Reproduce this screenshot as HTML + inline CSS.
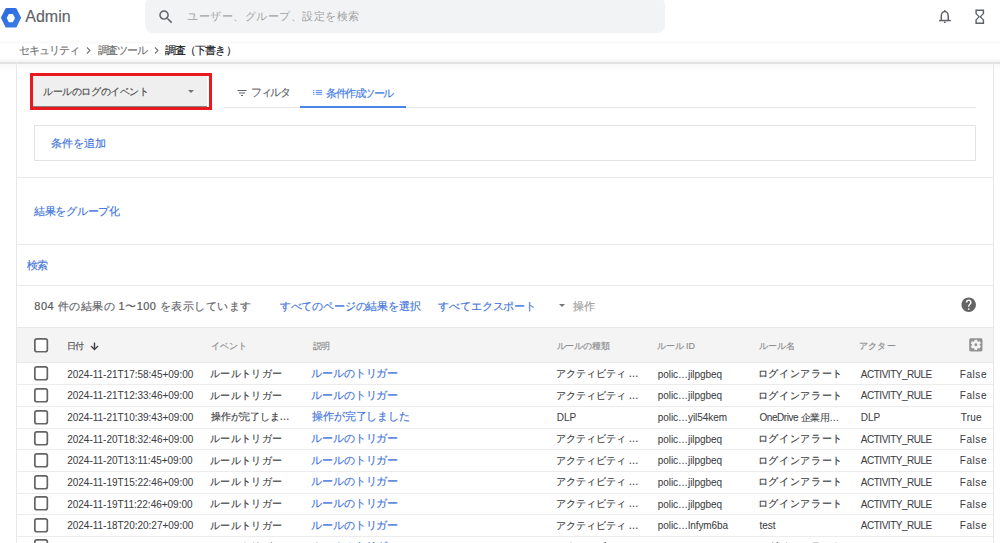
<!DOCTYPE html>
<html lang="ja">
<head>
<meta charset="utf-8">
<style>
*{box-sizing:border-box;margin:0;padding:0}
html,body{width:1000px;height:543px;overflow:hidden;background:#fff}
body{font-family:"Liberation Sans",sans-serif;color:#3c4043;position:relative;-webkit-text-stroke:0.15px currentColor}
.a{position:absolute;white-space:nowrap}
svg.a{overflow:visible}
.blue{color:#3f74dc}
.admin{left:25.3px;top:6.8px;font-size:16px;line-height:20px;color:#5f6368}
.search{left:145px;top:-3px;width:520px;height:36px;background:#f1f3f4;border-radius:8px}
.hdrline{left:0;top:62px;width:1000px;height:1.5px;background:#e2e2e2}
.hdrtop{left:0;top:58px;width:1000px;height:4px;background:linear-gradient(#fff,#f3f3f3)}
.hdr40{left:0;top:40px;width:1000px;height:5px;background:linear-gradient(#fff,#fafafa,#fff)}
.hdrsh{left:0;top:63.5px;width:1000px;height:8px;background:linear-gradient(#f8f8f8,#fdfdfd 60%,#fff)}
.vl{position:absolute;width:1px;background:#e8e8e8}
.hl{position:absolute;height:1px;background:#e8e8e8}
.cb{position:absolute;width:14.2px;height:14.6px;background:#fff}
.cb svg{position:absolute;left:0;top:0;width:14.2px;height:14.6px;overflow:visible}
.rl{position:absolute;left:17px;width:976px;height:1px;background:#ececec}
.c{position:absolute;white-space:nowrap;font-size:10px;line-height:12px;color:#3c4043;-webkit-text-stroke:0.15px currentColor}
.c.d{color:#3f74dc;font-size:11px}
.hd{position:absolute;white-space:nowrap;font-size:9px;line-height:12px;color:#8c8c8c;top:340px}
</style>
</head>
<body>
<!-- header -->
<svg class="a" style="left:0;top:7px;width:23px;height:22px" viewBox="0 0 23 22">
  <defs><linearGradient id="lg" x1="0" y1="0" x2="1" y2="1"><stop offset="0" stop-color="#2a68dc"/><stop offset="1" stop-color="#3f7ee8"/></linearGradient></defs>
  <path d="M0.9,10.8 L5.4,1.7 Q5.8,1 6.6,1 L15.4,1 Q16.2,1 16.6,1.7 L21.1,10.8 L16.6,19.9 Q16.2,20.6 15.4,20.6 L6.6,20.6 Q5.8,20.6 5.4,19.9 Z" fill="url(#lg)"/>
  <path d="M6.7,11.1 L8.9,6.9 L12.8,6.9 L15,11.1 L12.8,15.3 L8.9,15.3 Z" fill="#fff"/>
</svg>
<div class="a admin">Admin</div>
<div class="a search"></div>
<svg class="a" style="left:157px;top:8px;width:17.8px;height:17.8px" viewBox="0 0 24 24"><path fill="#5f6368" d="M15.5 14h-.79l-.28-.27A6.471 6.471 0 0 0 16 9.5 6.5 6.5 0 1 0 9.5 16c1.61 0 3.09-.59 4.23-1.57l.27.28v.79l5 4.99L20.49 19l-4.99-5zm-6 0C7.01 14 5 11.990 5 9.5S7.01 5 9.5 5 14 7.01 14 9.5 11.99 14 9.5 14z"/></svg>
<div class="a" style="left:187px;top:8.5px;font-size:11px;letter-spacing:0.5px;line-height:14px;color:#a2a2a2;-webkit-text-stroke:0">ユーザー、グループ、設定を検索</div>
<svg class="a" style="left:934px;top:6px;width:22px;height:22px" viewBox="0 0 22 22"><g fill="#5f6368"><path d="M7.3,14.3 V9.9 A3.45,4.5 0 0 1 14.2,9.9 V14.3" fill="none" stroke="#5f6368" stroke-width="1.5"/><rect x="5.1" y="13.8" width="11.7" height="1.5"/><rect x="9.95" y="3.9" width="1.6" height="1.6" rx="0.6"/><rect x="9.9" y="15.6" width="1.8" height="1.4"/></g></svg>
<svg class="a" style="left:970.8px;top:7.7px;width:17.5px;height:17.5px" viewBox="0 0 24 24"><path fill="#5f6368" d="M6 2v6h.01L6 8.01 10 12l-4 4 .01.01H6V22h12v-5.990h-.01L18 16l-4-4 4-3.99-.01-.01H18V2H6zm10 14.5V20H8v-3.5l4-4 4 4zm-4-5l-4-4V4h8v3.5l-4 4z"/></svg>

<!-- breadcrumb -->
<div class="a" style="left:18.6px;top:43px;font-size:10.5px;letter-spacing:-0.84px;line-height:14px;color:#757575">セキュリティ</div>
<svg class="a" style="left:86px;top:46px;width:5px;height:9px" viewBox="0 0 5 9"><path d="M1,1.5 L4,4.5 L1,7.5" fill="none" stroke="#757575" stroke-width="1.1"/></svg>
<div class="a" style="left:97.6px;top:43px;font-size:10.5px;letter-spacing:-1.15px;line-height:14px;color:#757575">調査ツール</div>
<svg class="a" style="left:153.5px;top:46px;width:5px;height:9px" viewBox="0 0 5 9"><path d="M1,1.5 L4,4.5 L1,7.5" fill="none" stroke="#757575" stroke-width="1.1"/></svg>
<div class="a" style="left:164.8px;top:43px;font-size:10.5px;letter-spacing:-0.87px;line-height:14px;color:#202124">調査（下書き）</div>

<div class="a hdr40"></div>
<div class="a hdrtop"></div>
<div class="a hdrline"></div>
<div class="a hdrsh"></div>

<!-- card borders -->
<div class="vl" style="left:16px;top:62px;height:481px"></div>
<div class="vl" style="left:993px;top:62px;height:481px"></div>

<!-- top section -->
<div class="a" style="left:29.6px;top:72.7px;width:182.3px;height:37px;border:3px solid #ea1920"></div>
<div class="a" style="left:33px;top:76.3px;width:174px;height:30.6px;background:#efefef;border-bottom:1px solid #858585"></div>
<div class="a" style="left:43px;top:84.5px;font-size:10px;letter-spacing:-0.4px;line-height:13px;color:#4d4d4d">ルールのログのイベント</div>
<div class="a" style="left:188px;top:90px;width:0;height:0;border-left:3.5px solid transparent;border-right:3.5px solid transparent;border-top:3.5px solid #757575"></div>

<div class="hl" style="left:224px;top:107px;width:752px;background:#e6e6e6"></div>
<div class="a" style="left:300px;top:106px;width:106px;height:2px;background:#4a86e8"></div>
<svg class="a" style="left:235.5px;top:87px;width:12px;height:12px" viewBox="0 0 24 24"><path fill="#5f6368" d="M10 18h4v-2h-4v2zM3 6v2h18V6H3zm3 7h12v-2H6v2z"/></svg>
<div class="a" style="left:251px;top:86px;font-size:10.5px;letter-spacing:-1.33px;line-height:13px;color:#5f6368">フィルタ</div>
<svg class="a" style="left:312px;top:89px;width:12px;height:7px" viewBox="0 0 12 7"><g fill="#5289ea"><rect x="1" y="1.2" width="1.4" height="0.95"/><rect x="1" y="3" width="1.4" height="0.95"/><rect x="1" y="4.8" width="1.4" height="0.95"/><rect x="3.8" y="1.2" width="6.4" height="0.95"/><rect x="3.8" y="3" width="6.4" height="0.95"/><rect x="3.8" y="4.8" width="6.4" height="0.95"/></g></svg>
<div class="a" style="left:326px;top:86.5px;font-size:10.5px;letter-spacing:-1.5px;line-height:13px;color:#3f7de6">条件作成ツール</div>

<div class="a" style="left:33.6px;top:124.5px;width:942px;height:36px;border:1px solid #e3e3e3"></div>
<div class="a blue" style="left:50.7px;top:136px;font-size:11px;letter-spacing:0.2px;line-height:14px">条件を追加</div>

<div class="hl" style="left:17px;top:177px;width:976px"></div>
<div class="a blue" style="left:34px;top:204px;font-size:11px;letter-spacing:-0.29px;line-height:14px">結果をグループ化</div>
<div class="hl" style="left:17px;top:244px;width:976px"></div>
<div class="a blue" style="left:26.8px;top:258px;font-size:11px;letter-spacing:-0.5px;line-height:14px">検索</div>
<div class="hl" style="left:17px;top:285px;width:976px"></div>

<div class="a" style="left:34.3px;top:299px;font-size:11px;letter-spacing:0.48px;line-height:14px;color:#5f6368"><span style="-webkit-text-stroke:0.2px #5f6368;color:#555">804</span> 件の結果の <span style="-webkit-text-stroke:0.2px #5f6368;color:#555">1</span>〜<span style="-webkit-text-stroke:0.2px #5f6368;color:#555">100</span> を表示しています</div>
<div class="a blue" style="left:279.8px;top:299px;font-size:11px;letter-spacing:-0.17px;line-height:14px">すべてのページの結果を選択</div>
<div class="a blue" style="left:438px;top:299px;font-size:11px;letter-spacing:-0.1px;line-height:14px">すべてエクスポート</div>
<div class="a" style="left:558.7px;top:304px;width:0;height:0;border-left:3.5px solid transparent;border-right:3.5px solid transparent;border-top:3.5px solid #757575"></div>
<div class="a" style="left:572.5px;top:299px;font-size:11px;line-height:14px;color:#9e9e9e">操作</div>
<svg class="a" style="left:959.6px;top:295.6px;width:17.4px;height:17.4px" viewBox="0 0 24 24"><path fill="#656565" d="M12 2C6.48 2 2 6.48 2 12s4.48 10 10 10 10-4.48 10-10S17.52 2 12 2zm1 17h-2v-2h2v2zm2.07-7.75l-.9.92C13.450 12.9 13 13.5 13 15h-2v-.5c0-1.1.45-2.1 1.17-2.83l1.24-1.26c.37-.36.59-.86.59-1.41 0-1.1-.9-2-2-2s-2 .9-2 2H8c0-2.21 1.79-4 4-4s4 1.79 4 4c0 .88-.36 1.68-.93 2.25z"/></svg>

<!-- table header -->
<div class="a" style="left:17px;top:327px;width:976px;height:36px;background:#f4f4f4;border-top:1px solid #e9e9e9;border-bottom:1px solid #e9e9e9"></div>
<div class="cb" style="left:33.8px;top:338px"><svg viewBox="0 0 14.2 14.6"><rect x="0.85" y="0.85" width="12.5" height="12.9" rx="2" fill="none" stroke="#646464" stroke-width="1.7"/></svg></div>
<div class="hd" style="left:66.5px;color:#4a4a4a;letter-spacing:-1px">日付</div>
<svg class="a" style="left:88.9px;top:340.8px;width:11px;height:11px" viewBox="0 0 24 24"><path fill="#333" stroke="#333" stroke-width="0.9" d="M20 12l-1.41-1.41L13 16.17V4h-2v12.17l-5.58-5.59L4 12l8 8 8-8z"/></svg>
<div class="hd" style="left:210.7px;letter-spacing:0.1px">イベント</div>
<div class="hd" style="left:312.5px;letter-spacing:-0.5px">説明</div>
<div class="hd" style="left:556.6px;letter-spacing:-0.2px">ルールの種類</div>
<div class="hd" style="left:657px;letter-spacing:-0.12px">ルール ID</div>
<div class="hd" style="left:758.5px;letter-spacing:0.08px">ルール名</div>
<div class="hd" style="left:859px;letter-spacing:0.17px">アクター</div>
<svg class="a" style="left:966.5px;top:336px;width:17.7px;height:17.7px" viewBox="0 0 24 24"><path fill="#939393" d="M12 10c-1.1 0-2 .9-2 2s.9 2 2 2 2-.9 2-2-.9-2-2-2zm7-7H5c-1.11 0-2 .9-2 2v14c0 1.1.89 2 2 2h14c1.11 0 2-.9 2-2V5c0-1.1-.89-2-2-2zm-1.75 9c0 .23-.02.46-.05.68l1.48 1.16c.13.11.17.3.08.45l-1.4 2.42c-.09.15-.27.21-.43.15l-1.74-.7c-.36.28-.76.51-1.18.69l-.26 1.85c-.03.17-.18.3-.35.3h-2.8c-.17 0-.32-.13-.35-.29l-.26-1.85c-.43-.18-.82-.41-1.18-.69l-1.74.7c-.16.06-.34 0-.43-.15l-1.4-2.42c-.09-.15-.05-.34.08-.45l1.48-1.16c-.03-.23-.05-.46-.05-.69 0-.23.02-.46.05-.68l-1.48-1.160c-.13-.11-.17-.3-.08-.45l1.4-2.42c.09-.15.27-.21.43-.15l1.74.7c.36-.28.76-.51 1.18-.69l.26-1.85c.03-.17.18-.3.35-.3h2.8c.17 0 .32.13.35.29l.26 1.85c.43.18.82.41 1.18.69l1.74-.7c.16-.06.34 0 .43.15l1.4 2.42c.09.15.05.34-.08.45l-1.48 1.16c.03.23.05.46.05.69z"/></svg>

<div class="cb" style="left:33.8px;top:366.20px"><svg viewBox="0 0 14.2 14.6"><rect x="0.85" y="0.85" width="12.5" height="12.9" rx="2" fill="none" stroke="#646464" stroke-width="1.7"/></svg></div>
<div class="c" style="left:67.2px;top:368.60px;font-size:10px;letter-spacing:-0.008px;-webkit-text-stroke:0.05px currentColor">2024-11-21T17:58:45+09:00</div>
<div class="c" style="left:210px;top:367.90px;font-size:10px;letter-spacing:0.33px">ルールトリガー</div>
<div class="c d" style="left:311.1px;top:367.10px;font-size:11px;letter-spacing:-0.1px">ルールのトリガー</div>
<div class="c" style="left:555.75px;top:367.90px;font-size:10px;letter-spacing:0px">アクティビティ …</div>
<div class="c" style="left:657.8px;top:368.60px;font-size:10px;letter-spacing:-0.06px;-webkit-text-stroke:0.05px currentColor">polic…jilpgbeq</div>
<div class="c" style="left:757.5px;top:367.90px;font-size:10px;letter-spacing:0.71px">ログインアラート</div>
<div class="c" style="left:860.8px;top:368.60px;font-size:10px;letter-spacing:-0.48px;-webkit-text-stroke:0.05px currentColor">ACTIVITY_RULE</div>
<div class="c" style="left:959.8px;top:368.60px;font-size:10px;letter-spacing:0.55px;-webkit-text-stroke:0.05px currentColor">False</div>
<div class="rl" style="top:384.26px"></div>
<div class="cb" style="left:33.8px;top:387.86px"><svg viewBox="0 0 14.2 14.6"><rect x="0.85" y="0.85" width="12.5" height="12.9" rx="2" fill="none" stroke="#646464" stroke-width="1.7"/></svg></div>
<div class="c" style="left:67.2px;top:390.26px;font-size:10px;letter-spacing:-0.008px;-webkit-text-stroke:0.05px currentColor">2024-11-21T12:33:46+09:00</div>
<div class="c" style="left:210px;top:389.56px;font-size:10px;letter-spacing:0.33px">ルールトリガー</div>
<div class="c d" style="left:311.1px;top:388.76px;font-size:11px;letter-spacing:-0.1px">ルールのトリガー</div>
<div class="c" style="left:555.75px;top:389.56px;font-size:10px;letter-spacing:0px">アクティビティ …</div>
<div class="c" style="left:657.8px;top:390.26px;font-size:10px;letter-spacing:-0.06px;-webkit-text-stroke:0.05px currentColor">polic…jilpgbeq</div>
<div class="c" style="left:757.5px;top:389.56px;font-size:10px;letter-spacing:0.71px">ログインアラート</div>
<div class="c" style="left:860.8px;top:390.26px;font-size:10px;letter-spacing:-0.48px;-webkit-text-stroke:0.05px currentColor">ACTIVITY_RULE</div>
<div class="c" style="left:959.8px;top:390.26px;font-size:10px;letter-spacing:0.55px;-webkit-text-stroke:0.05px currentColor">False</div>
<div class="rl" style="top:405.92px"></div>
<div class="cb" style="left:33.8px;top:409.52px"><svg viewBox="0 0 14.2 14.6"><rect x="0.85" y="0.85" width="12.5" height="12.9" rx="2" fill="none" stroke="#646464" stroke-width="1.7"/></svg></div>
<div class="c" style="left:67.2px;top:411.92px;font-size:10px;letter-spacing:-0.008px;-webkit-text-stroke:0.05px currentColor">2024-11-21T10:39:43+09:00</div>
<div class="c" style="left:211px;top:411.22px;font-size:10px;letter-spacing:-0.21px">操作が完了しま…</div>
<div class="c d" style="left:312.1px;top:410.42px;font-size:11px;letter-spacing:-0.12px">操作が完了しました</div>
<div class="c" style="left:556.75px;top:411.92px;font-size:10px;letter-spacing:0px;-webkit-text-stroke:0.05px currentColor">DLP</div>
<div class="c" style="left:657.8px;top:411.92px;font-size:10px;letter-spacing:-0.06px;-webkit-text-stroke:0.05px currentColor">polic…yil54kem</div>
<div class="c" style="left:759.5px;top:411.92px;font-size:10px;letter-spacing:-0.44px;-webkit-text-stroke:0.05px currentColor">OneDrive 企業用…</div>
<div class="c" style="left:860.8px;top:411.92px;font-size:10px;letter-spacing:0px;-webkit-text-stroke:0.05px currentColor">DLP</div>
<div class="c" style="left:960.8px;top:411.92px;font-size:10px;letter-spacing:0.23px;-webkit-text-stroke:0.05px currentColor">True</div>
<div class="rl" style="top:427.58px"></div>
<div class="cb" style="left:33.8px;top:431.18px"><svg viewBox="0 0 14.2 14.6"><rect x="0.85" y="0.85" width="12.5" height="12.9" rx="2" fill="none" stroke="#646464" stroke-width="1.7"/></svg></div>
<div class="c" style="left:67.2px;top:433.58px;font-size:10px;letter-spacing:-0.008px;-webkit-text-stroke:0.05px currentColor">2024-11-20T18:32:46+09:00</div>
<div class="c" style="left:210px;top:432.88px;font-size:10px;letter-spacing:0.33px">ルールトリガー</div>
<div class="c d" style="left:311.1px;top:432.08px;font-size:11px;letter-spacing:-0.1px">ルールのトリガー</div>
<div class="c" style="left:555.75px;top:432.88px;font-size:10px;letter-spacing:0px">アクティビティ …</div>
<div class="c" style="left:657.8px;top:433.58px;font-size:10px;letter-spacing:-0.06px;-webkit-text-stroke:0.05px currentColor">polic…jilpgbeq</div>
<div class="c" style="left:757.5px;top:432.88px;font-size:10px;letter-spacing:0.71px">ログインアラート</div>
<div class="c" style="left:860.8px;top:433.58px;font-size:10px;letter-spacing:-0.48px;-webkit-text-stroke:0.05px currentColor">ACTIVITY_RULE</div>
<div class="c" style="left:959.8px;top:433.58px;font-size:10px;letter-spacing:0.55px;-webkit-text-stroke:0.05px currentColor">False</div>
<div class="rl" style="top:449.24px"></div>
<div class="cb" style="left:33.8px;top:452.84px"><svg viewBox="0 0 14.2 14.6"><rect x="0.85" y="0.85" width="12.5" height="12.9" rx="2" fill="none" stroke="#646464" stroke-width="1.7"/></svg></div>
<div class="c" style="left:67.2px;top:455.24px;font-size:10px;letter-spacing:-0.008px;-webkit-text-stroke:0.05px currentColor">2024-11-20T13:11:45+09:00</div>
<div class="c" style="left:210px;top:454.54px;font-size:10px;letter-spacing:0.33px">ルールトリガー</div>
<div class="c d" style="left:311.1px;top:453.74px;font-size:11px;letter-spacing:-0.1px">ルールのトリガー</div>
<div class="c" style="left:555.75px;top:454.54px;font-size:10px;letter-spacing:0px">アクティビティ …</div>
<div class="c" style="left:657.8px;top:455.24px;font-size:10px;letter-spacing:-0.06px;-webkit-text-stroke:0.05px currentColor">polic…jilpgbeq</div>
<div class="c" style="left:757.5px;top:454.54px;font-size:10px;letter-spacing:0.71px">ログインアラート</div>
<div class="c" style="left:860.8px;top:455.24px;font-size:10px;letter-spacing:-0.48px;-webkit-text-stroke:0.05px currentColor">ACTIVITY_RULE</div>
<div class="c" style="left:959.8px;top:455.24px;font-size:10px;letter-spacing:0.55px;-webkit-text-stroke:0.05px currentColor">False</div>
<div class="rl" style="top:470.90px"></div>
<div class="cb" style="left:33.8px;top:474.50px"><svg viewBox="0 0 14.2 14.6"><rect x="0.85" y="0.85" width="12.5" height="12.9" rx="2" fill="none" stroke="#646464" stroke-width="1.7"/></svg></div>
<div class="c" style="left:67.2px;top:476.90px;font-size:10px;letter-spacing:-0.008px;-webkit-text-stroke:0.05px currentColor">2024-11-19T15:22:46+09:00</div>
<div class="c" style="left:210px;top:476.20px;font-size:10px;letter-spacing:0.33px">ルールトリガー</div>
<div class="c d" style="left:311.1px;top:475.40px;font-size:11px;letter-spacing:-0.1px">ルールのトリガー</div>
<div class="c" style="left:555.75px;top:476.20px;font-size:10px;letter-spacing:0px">アクティビティ …</div>
<div class="c" style="left:657.8px;top:476.90px;font-size:10px;letter-spacing:-0.06px;-webkit-text-stroke:0.05px currentColor">polic…jilpgbeq</div>
<div class="c" style="left:757.5px;top:476.20px;font-size:10px;letter-spacing:0.71px">ログインアラート</div>
<div class="c" style="left:860.8px;top:476.90px;font-size:10px;letter-spacing:-0.48px;-webkit-text-stroke:0.05px currentColor">ACTIVITY_RULE</div>
<div class="c" style="left:959.8px;top:476.90px;font-size:10px;letter-spacing:0.55px;-webkit-text-stroke:0.05px currentColor">False</div>
<div class="rl" style="top:492.56px"></div>
<div class="cb" style="left:33.8px;top:496.16px"><svg viewBox="0 0 14.2 14.6"><rect x="0.85" y="0.85" width="12.5" height="12.9" rx="2" fill="none" stroke="#646464" stroke-width="1.7"/></svg></div>
<div class="c" style="left:67.2px;top:498.56px;font-size:10px;letter-spacing:-0.008px;-webkit-text-stroke:0.05px currentColor">2024-11-19T11:22:46+09:00</div>
<div class="c" style="left:210px;top:497.86px;font-size:10px;letter-spacing:0.33px">ルールトリガー</div>
<div class="c d" style="left:311.1px;top:497.06px;font-size:11px;letter-spacing:-0.1px">ルールのトリガー</div>
<div class="c" style="left:555.75px;top:497.86px;font-size:10px;letter-spacing:0px">アクティビティ …</div>
<div class="c" style="left:657.8px;top:498.56px;font-size:10px;letter-spacing:-0.06px;-webkit-text-stroke:0.05px currentColor">polic…jilpgbeq</div>
<div class="c" style="left:757.5px;top:497.86px;font-size:10px;letter-spacing:0.71px">ログインアラート</div>
<div class="c" style="left:860.8px;top:498.56px;font-size:10px;letter-spacing:-0.48px;-webkit-text-stroke:0.05px currentColor">ACTIVITY_RULE</div>
<div class="c" style="left:959.8px;top:498.56px;font-size:10px;letter-spacing:0.55px;-webkit-text-stroke:0.05px currentColor">False</div>
<div class="rl" style="top:514.22px"></div>
<div class="cb" style="left:33.8px;top:517.82px"><svg viewBox="0 0 14.2 14.6"><rect x="0.85" y="0.85" width="12.5" height="12.9" rx="2" fill="none" stroke="#646464" stroke-width="1.7"/></svg></div>
<div class="c" style="left:67.2px;top:520.22px;font-size:10px;letter-spacing:-0.008px;-webkit-text-stroke:0.05px currentColor">2024-11-18T20:20:27+09:00</div>
<div class="c" style="left:210px;top:519.52px;font-size:10px;letter-spacing:0.33px">ルールトリガー</div>
<div class="c d" style="left:311.1px;top:518.72px;font-size:11px;letter-spacing:-0.1px">ルールのトリガー</div>
<div class="c" style="left:555.75px;top:519.52px;font-size:10px;letter-spacing:0px">アクティビティ …</div>
<div class="c" style="left:657.8px;top:520.22px;font-size:10px;letter-spacing:-0.06px;-webkit-text-stroke:0.05px currentColor">polic…lnfym6ba</div>
<div class="c" style="left:759.5px;top:520.22px;font-size:10px;letter-spacing:0px;-webkit-text-stroke:0.05px currentColor">test</div>
<div class="c" style="left:860.8px;top:520.22px;font-size:10px;letter-spacing:-0.48px;-webkit-text-stroke:0.05px currentColor">ACTIVITY_RULE</div>
<div class="c" style="left:959.8px;top:520.22px;font-size:10px;letter-spacing:0.55px;-webkit-text-stroke:0.05px currentColor">False</div>
<div class="rl" style="top:535.88px"></div>
<div class="cb" style="left:33.8px;top:539.48px"><svg viewBox="0 0 14.2 14.6"><rect x="0.85" y="0.85" width="12.5" height="12.9" rx="2" fill="none" stroke="#646464" stroke-width="1.7"/></svg></div>
<div class="c" style="left:67.2px;top:541.88px;font-size:10px;letter-spacing:-0.008px;-webkit-text-stroke:0.05px currentColor">2024-11-18T12:10:46+09:00</div>
<div class="c" style="left:210px;top:541.18px;font-size:10px;letter-spacing:0.33px">ルールトリガー</div>
<div class="c d" style="left:311.1px;top:540.38px;font-size:11px;letter-spacing:-0.1px">ルールのトリガー</div>
<div class="c" style="left:555.75px;top:541.18px;font-size:10px;letter-spacing:0px">アクティビティ …</div>
<div class="c" style="left:657.8px;top:541.88px;font-size:10px;letter-spacing:-0.06px;-webkit-text-stroke:0.05px currentColor">polic…jilpgbeq</div>
<div class="c" style="left:757.5px;top:541.18px;font-size:10px;letter-spacing:0.71px">ログインアラート</div>
<div class="c" style="left:860.8px;top:541.88px;font-size:10px;letter-spacing:-0.48px;-webkit-text-stroke:0.05px currentColor">ACTIVITY_RULE</div>
<div class="c" style="left:959.8px;top:541.88px;font-size:10px;letter-spacing:0.55px;-webkit-text-stroke:0.05px currentColor">False</div>
<div class="rl" style="top:557.54px"></div>
</body>
</html>
